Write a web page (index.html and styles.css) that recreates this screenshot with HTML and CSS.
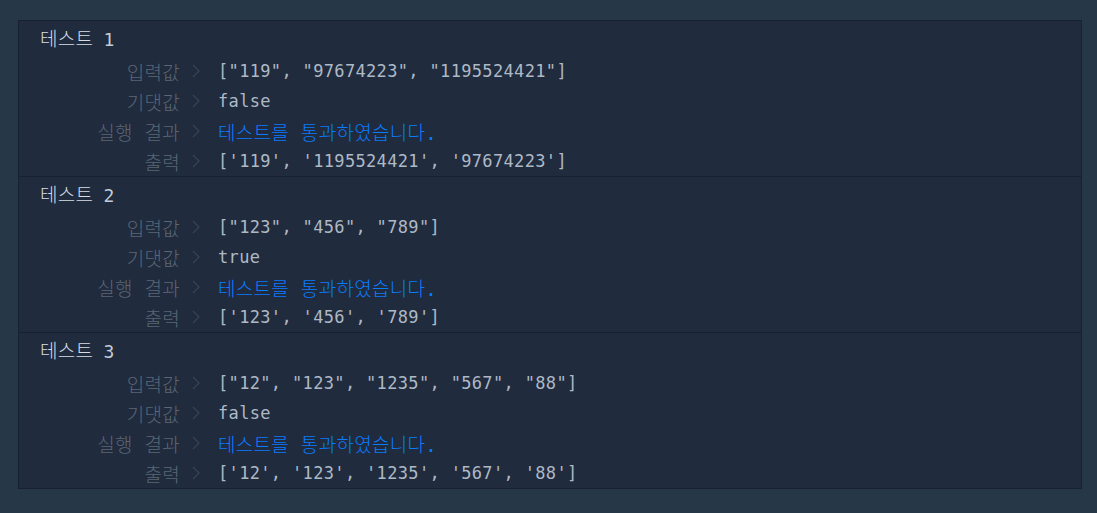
FILE: index.html
```html
<!DOCTYPE html>
<html lang="ko">
<head>
<meta charset="utf-8">
<title>테스트 결과</title>
<link rel="stylesheet" href="styles.css">
</head>
<body>
<div class="panel">
  <section class="case">
    <div class="title"><span class="ko">테스트</span> <span class="num">1</span></div>
    <div class="row"><span class="label">입력값</span><svg class="chev" viewBox="0 0 8 14"><path d="M1 1 L7 7 L1 13"/></svg><span class="value">["119", "97674223", "1195524421"]</span></div>
    <div class="row"><span class="label">기댓값</span><svg class="chev" viewBox="0 0 8 14"><path d="M1 1 L7 7 L1 13"/></svg><span class="value">false</span></div>
    <div class="row"><span class="label">실행 결과</span><svg class="chev" viewBox="0 0 8 14"><path d="M1 1 L7 7 L1 13"/></svg><span class="value pass">테스트를 통과하였습니다.</span></div>
    <div class="row"><span class="label">출력</span><svg class="chev" viewBox="0 0 8 14"><path d="M1 1 L7 7 L1 13"/></svg><span class="value">['119', '1195524421', '97674223']</span></div>
  </section>
  <section class="case">
    <div class="title"><span class="ko">테스트</span> <span class="num">2</span></div>
    <div class="row"><span class="label">입력값</span><svg class="chev" viewBox="0 0 8 14"><path d="M1 1 L7 7 L1 13"/></svg><span class="value">["123", "456", "789"]</span></div>
    <div class="row"><span class="label">기댓값</span><svg class="chev" viewBox="0 0 8 14"><path d="M1 1 L7 7 L1 13"/></svg><span class="value">true</span></div>
    <div class="row"><span class="label">실행 결과</span><svg class="chev" viewBox="0 0 8 14"><path d="M1 1 L7 7 L1 13"/></svg><span class="value pass">테스트를 통과하였습니다.</span></div>
    <div class="row"><span class="label">출력</span><svg class="chev" viewBox="0 0 8 14"><path d="M1 1 L7 7 L1 13"/></svg><span class="value">['123', '456', '789']</span></div>
  </section>
  <section class="case">
    <div class="title"><span class="ko">테스트</span> <span class="num">3</span></div>
    <div class="row"><span class="label">입력값</span><svg class="chev" viewBox="0 0 8 14"><path d="M1 1 L7 7 L1 13"/></svg><span class="value">["12", "123", "1235", "567", "88"]</span></div>
    <div class="row"><span class="label">기댓값</span><svg class="chev" viewBox="0 0 8 14"><path d="M1 1 L7 7 L1 13"/></svg><span class="value">false</span></div>
    <div class="row"><span class="label">실행 결과</span><svg class="chev" viewBox="0 0 8 14"><path d="M1 1 L7 7 L1 13"/></svg><span class="value pass">테스트를 통과하였습니다.</span></div>
    <div class="row"><span class="label">출력</span><svg class="chev" viewBox="0 0 8 14"><path d="M1 1 L7 7 L1 13"/></svg><span class="value">['12', '123', '1235', '567', '88']</span></div>
  </section>
</div>
</body>
</html>
```

FILE: styles.css
```css
html, body {
  margin: 0;
  height: 100%;
  background: #263747;
}
body {
  padding: 20px 0 0 18px;
  box-sizing: border-box;
  font-family: "DejaVu Sans Mono", "Noto Sans CJK KR", monospace;
  font-size: 17px;
  letter-spacing: 0.34px;
}
.panel {
  width: 1064px;
  box-sizing: border-box;
  background: #202b3d;
  border: 1px solid #172130;
}
.case {
  height: 156px;
  box-sizing: border-box;
  border-bottom: 1px solid #172130;
}
.case:last-child {
  border-bottom: none;
  height: 155px;
}
.title {
  height: 35px;
  box-sizing: border-box;
  padding: 4px 0 3px 21px;
  line-height: 28px;
  white-space: pre;
  letter-spacing: 0;
  color: #d0d8e0;
}
.title .ko {
  font-size: 19px;
  font-weight: 300;
  letter-spacing: 0.3px;
  color: #d6dde4;
}
.title .num {
  font-size: 18px;
  color: #c3cdd8;
}
.row {
  display: flex;
  align-items: center;
  height: 30px;
  white-space: pre;
}
.label {
  width: 161px;
  text-align: right;
  color: #5a6676;
  font-size: 19px;
  font-weight: 300;
  letter-spacing: 0.3px;
}
.chev {
  width: 8px;
  height: 14px;
  margin-left: 12px;
  fill: none;
  stroke: #394556;
  stroke-width: 1.1;
}
.value {
  margin-left: 18px;
  color: #aeb9c6;
}
.value.pass {
  color: #0a7cff;
  font-size: 19px;
  font-weight: 300;
  letter-spacing: 0.3px;
}
```
